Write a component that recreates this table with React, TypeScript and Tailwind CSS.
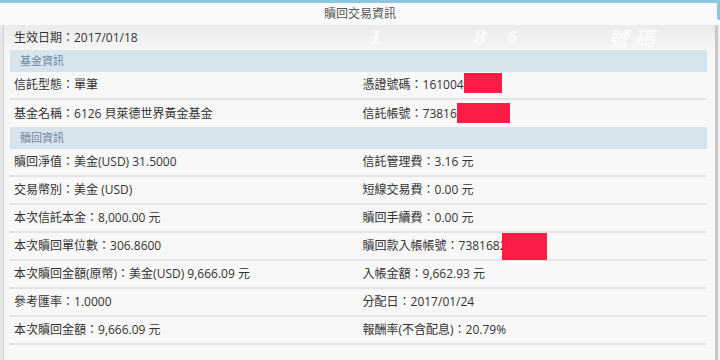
import React from 'react';

type Cell = { label: string; value: string; redact?: { w: number; h: number; mt: number; ml?: number } };

const fundRows: [Cell, Cell][] = [
  [
    { label: '信託型態', value: '單筆' },
    { label: '憑證號碼', value: '161004', redact: { w: 38, h: 20, mt: 1 } },
  ],
  [
    { label: '基金名稱', value: '6126 貝萊德世界黃金基金' },
    { label: '信託帳號', value: '73816', redact: { w: 53, h: 20, mt: 3 } },
  ],
];

const redeemRows: [Cell, Cell][] = [
  [
    { label: '贖回淨值', value: '美金(USD) 31.5000' },
    { label: '信託管理費', value: '3.16 元' },
  ],
  [
    { label: '交易幣別', value: '美金 (USD)' },
    { label: '短線交易費', value: '0.00 元' },
  ],
  [
    { label: '本次信託本金', value: '8,000.00 元' },
    { label: '贖回手續費', value: '0.00 元' },
  ],
  [
    { label: '本次贖回單位數', value: '306.8600' },
    { label: '贖回款入帳帳號', value: '7381682', redact: { w: 45, h: 27, mt: 0, ml: -5 } },
  ],
  [
    { label: '本次贖回金額(原幣)', value: '美金(USD) 9,666.09 元' },
    { label: '入帳金額', value: '9,662.93 元' },
  ],
  [
    { label: '參考匯率', value: '1.0000' },
    { label: '分配日', value: '2017/01/24' },
  ],
  [
    { label: '本次贖回金額', value: '9,666.09 元' },
    { label: '報酬率(不含配息)', value: '20.79%' },
  ],
];

function CellView({ cell }: { cell: Cell }) {
  return (
    <div className="flex-1 flex items-center px-[4px] h-full">
      <span className="whitespace-pre">
        {cell.label}：{cell.value}
      </span>
      {cell.redact && (
        <span
          className="self-start bg-[#fd1c43]"
          style={{
            width: cell.redact.w,
            height: cell.redact.h,
            marginTop: cell.redact.mt,
            marginLeft: cell.redact.ml ?? 0,
          }}
        />
      )}
    </div>
  );
}

function Row({ cells, h = 'h-[28px]', border = true }: { cells: [Cell, Cell]; h?: string; border?: boolean }) {
  return (
    <div className={`${h} flex ${border ? 'border-b-2 border-[#e4e4e4]' : ''}`}>
      <CellView cell={cells[0]} />
      <CellView cell={cells[1]} />
    </div>
  );
}

function SectionHeader({ title }: { title: string }) {
  return (
    <div className="h-[22px] bg-[#d6e4ee] flex items-center pl-[10px] text-[11px] text-[#71879a]">
      {title}
    </div>
  );
}

export default function App() {
  return (
    <div className="w-[720px] h-[360px] overflow-hidden flex flex-col bg-[#f8f8f8] text-[12px] text-[#333] font-['Open_Sans','Noto_Sans_CJK_TC',sans-serif]">
      <div className="h-[3px] bg-[#8ec6df]" />
      <div className="relative h-[22px] bg-[#f9fafb] flex items-center justify-center text-[#555]">
        贖回交易資訊
        <div className="absolute right-0 top-0 w-[3px] h-[17px] bg-[#8ec6df] rounded-bl-[2px]" />
      </div>
      <div className="flex-1 flex">
        <div className="w-[4px] bg-[#e6e6e6] border-r border-[#cfcfcf]" />
        <div className="flex-1 flex flex-col pl-[6px] pr-[8px]">
          {/* effective date row, faint watermark behind it */}
          <div className="relative h-[25px] flex items-center -ml-[6px] pl-[10px] -mr-[8px] bg-gradient-to-b from-[#ebebeb] to-[#f6f6f6]">
            <div className="absolute left-[365px] top-0 h-[25px] flex items-center gap-[90px] text-[20px] leading-[25px] italic font-bold text-white/70 font-['DejaVu_Sans',sans-serif] select-none">
              <span>1</span>
              <span className="flex gap-[20px]">
                <span>8</span>
                <span className="text-[16px]">6</span>
              </span>
              <span className="tracking-[6px] font-['Noto_Sans_CJK_TC',sans-serif]">號碼</span>
            </div>
            <span className="relative">生效日期：2017/01/18</span>
          </div>
          <SectionHeader title="基金資訊" />
          <Row cells={fundRows[0]} />
          <Row cells={fundRows[1]} h="h-[27px]" border={false} />
          <SectionHeader title="贖回資訊" />
          {redeemRows.map((r, i) => (
            <Row key={i} cells={r} />
          ))}
        </div>
        <div className="w-[3px] bg-[#c8c8c8]" />
        <div className="w-[2px] bg-[#f0f0f0]" />
      </div>
    </div>
  );
}
